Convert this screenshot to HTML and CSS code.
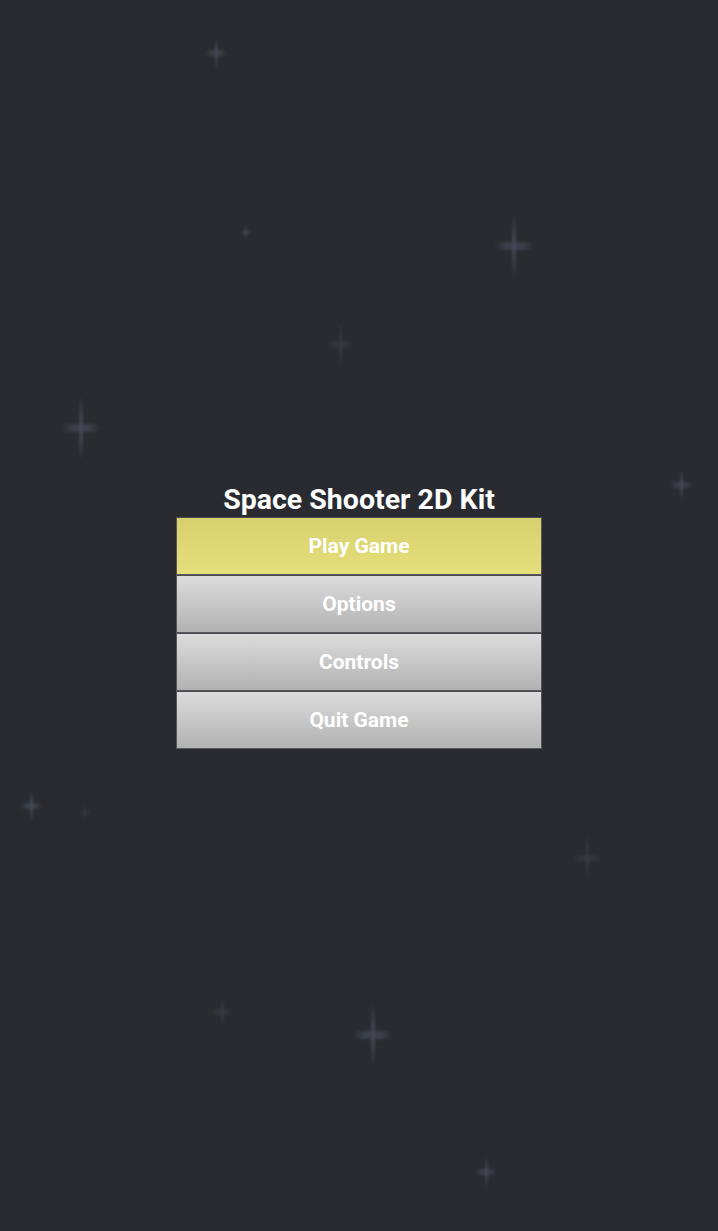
FILE: index.html
```html
<!DOCTYPE html>
<html>
<head>
<meta charset="utf-8">
<title>Space Shooter 2D Kit</title>
<link rel="stylesheet" href="styles.css">
</head>
<body>
<div class="sky">
  <span class="star s" style="left:216px;top:53px"></span>
  <span class="star l" style="left:514px;top:246px"></span>
  <span class="star xs" style="left:246px;top:232px"></span>
  <span class="star m faint" style="left:340px;top:345px"></span>
  <span class="star l" style="left:81px;top:428px"></span>
  <span class="star s" style="left:681px;top:485px"></span>
  <span class="star s" style="left:31px;top:806px"></span>
  <span class="star xs faint" style="left:85px;top:812px"></span>
  <span class="star m faint" style="left:587px;top:858px"></span>
  <span class="star s faint" style="left:222px;top:1012px"></span>
  <span class="star l" style="left:373px;top:1035px"></span>
  <span class="star s" style="left:486px;top:1172px"></span>
</div>
<main class="menu">
  <h1 class="title">Space Shooter 2D Kit</h1>
  <div class="buttons">
    <button class="btn btn-primary">Play Game</button>
    <button class="btn">Options</button>
    <button class="btn">Controls</button>
    <button class="btn">Quit Game</button>
  </div>
</main>
</body>
</html>
```
FILE: styles.css
```css
html, body {
  margin: 0;
  padding: 0;
}
body {
  width: 718px;
  height: 1231px;
  background: #2a2b30;
  font-family: Roboto, "Liberation Sans", sans-serif;
  overflow: hidden;
  position: relative;
}
.sky {
  position: absolute;
  inset: 0;
}
.star {
  position: absolute;
  width: 0;
  height: 0;
}
.star::before, .star::after {
  content: "";
  position: absolute;
}
.star::before {
  /* horizontal bar */
  background: linear-gradient(to right, rgba(72,78,92,0), rgba(72,78,92,0.6) 30%, rgba(72,78,92,0.6) 70%, rgba(72,78,92,0));
  filter: blur(1.5px);
}
.star::after {
  /* vertical bar */
  background: linear-gradient(to bottom, rgba(72,78,92,0), rgba(72,78,92,0.65) 35%, rgba(72,78,92,0.65) 65%, rgba(72,78,92,0));
  filter: blur(1px);
}
.star.l::before { width: 40px; height: 8px; left: -20px; top: -4px; }
.star.l::after { width: 4px; height: 64px; left: -2px; top: -32px; }
.star.m::before { width: 30px; height: 6px; left: -15px; top: -3px; }
.star.m::after { width: 3px; height: 48px; left: -1.5px; top: -24px; }
.star.s::before { width: 22px; height: 6px; left: -11px; top: -3px; }
.star.s::after { width: 3px; height: 32px; left: -1.5px; top: -16px; }
.star.xs::before { width: 12px; height: 3px; left: -6px; top: -1.5px; }
.star.xs::after { width: 2px; height: 16px; left: -1px; top: -8px; }
.star.faint { opacity: 0.5; }

.menu {
  position: relative;
  display: flex;
  flex-direction: column;
  align-items: center;
  padding-top: 482px;
}
.title {
  margin: 0;
  color: #ffffff;
  font-size: 28.5px;
  font-weight: 700;
  line-height: 35px;
  height: 35px;
}
.buttons {
  display: flex;
  flex-direction: column;
  width: 366px;
}
.btn {
  display: block;
  width: 366px;
  height: 58px;
  margin: 0;
  padding: 0;
  border: 1px solid #56575a;
  border-top-color: #4a4b4f;
  background: linear-gradient(to bottom, #dcdcdc, #b2b2b2);
  color: #ffffff;
  font-family: Roboto, "Liberation Sans", sans-serif;
  font-size: 21px;
  font-weight: 700;
  text-align: center;
  cursor: pointer;
}
.btn-primary {
  background: linear-gradient(to bottom, #d8d06e, #e5df7b);
}
```
